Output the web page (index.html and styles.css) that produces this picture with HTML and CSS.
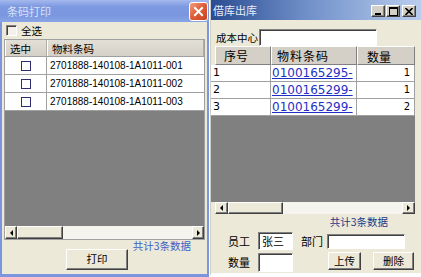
FILE: index.html
```html
<!DOCTYPE html>
<html lang="zh-CN">
<head>
    <meta charset="UTF-8">
    <title>条码打印 / 借库出库</title>
    <link rel="stylesheet" href="styles.css">
</head>
<body>
<div class="desk">
    <!-- 条码打印 -->
    <div class="xp-win">
        <div class="xp-title">
            <span class="xp-caption">条码打印</span>
            <span class="xp-close">
                <svg width="11" height="11" viewBox="0 0 11 11"><path d="M2 2 L9 9 M9 2 L2 9" stroke="#fff" stroke-width="2" stroke-linecap="square"/></svg>
            </span>
        </div>
        <div class="check-all"><span class="chk"></span>全选</div>
        <div class="l-grid">
            <div class="l-head">
                <span class="l-sel">选中</span>
                <span class="l-code">物料条码</span>
            </div>
            <div class="l-row"><span class="l-sel"><i class="box"></i></span><span class="l-code">2701888-140108-1A1011-001</span></div>
            <div class="l-row"><span class="l-sel"><i class="box"></i></span><span class="l-code">2701888-140108-1A1011-002</span></div>
            <div class="l-row"><span class="l-sel"><i class="box"></i></span><span class="l-code">2701888-140108-1A1011-003</span></div>
            <div class="empty"></div>
            <div class="hscroll">
                <span class="sb-btn"><i class="tri-l"></i></span>
                <span class="sb-thumb l-thumb"></span>
                <span class="sb-track"></span>
                <span class="sb-btn"><i class="tri-r"></i></span>
            </div>
        </div>
        <div class="l-total">共计3条数据</div>
        <button class="btn btn-print">打印</button>
    </div>

    <!-- 借库出库 -->
    <div class="cl-win">
        <div class="cl-title">
            <span class="cl-caption">借库出库</span>
            <span class="tb-btns">
                <span class="tb-btn"><svg width="8" height="8" viewBox="0 0 8 8"><rect x="1" y="6" width="6" height="2" fill="#000"/></svg></span>
                <span class="tb-btn"><svg width="9" height="9" viewBox="0 0 9 9"><rect x="0.5" y="0.5" width="8" height="8" fill="none" stroke="#000"/><rect x="0" y="0" width="9" height="2" fill="#000"/></svg></span>
                <span class="tb-btn tb-close"><svg width="8" height="7" viewBox="0 0 8 7"><path d="M0.5 0 L7.5 7 M7.5 0 L0.5 7" stroke="#000" stroke-width="1.6"/></svg></span>
            </span>
        </div>
        <div class="cost-row">
            <span class="cost-label">成本中心</span>
            <span class="field cost-input"></span>
        </div>
        <div class="r-grid">
            <div class="r-head">
                <span class="r-pad"></span>
                <span class="rh rh-no">序号</span>
                <span class="rh rh-code">物料条码</span>
                <span class="rh rh-qty">数量</span>
            </div>
            <div class="r-row"><span class="r-no">1</span><span class="r-code"><a href="#">0100165295-</a></span><span class="r-qty">1</span></div>
            <div class="r-row"><span class="r-no">2</span><span class="r-code"><a href="#">0100165299-</a></span><span class="r-qty">1</span></div>
            <div class="r-row"><span class="r-no">3</span><span class="r-code"><a href="#">0100165299-</a></span><span class="r-qty">2</span></div>
            <div class="empty"></div>
            <div class="hscroll r-scroll">
                <span class="sb-btn r-btn"><i class="tri-l"></i></span>
                <span class="sb-thumb r-thumb"></span>
                <span class="sb-track"></span>
                <span class="sb-btn r-btn"><i class="tri-r"></i></span>
            </div>
        </div>
        <div class="r-total">共计3条数据</div>
        <div class="form-row row-1">
            <span class="f-label">员工</span>
            <span class="field f-emp">张三</span>
            <span class="f-label f-dept-label">部门</span>
            <span class="field f-dept"></span>
        </div>
        <div class="form-row row-2">
            <span class="f-label">数量</span>
            <span class="field f-qty"></span>
            <button class="btn btn-up">上传</button>
            <button class="btn btn-del">删除</button>
        </div>
    </div>
</div>
</body>
</html>
```

FILE: styles.css
```css
* {
    box-sizing: border-box;
}
body {
    margin: 0;
    width: 421px;
    height: 277px;
    overflow: hidden;
    background: #fff;
    font-family: "Noto Sans CJK SC", "Liberation Sans", sans-serif;
    font-size: 10.5px;
    color: #000;
}
.desk {
    display: flex;
    gap: 1px;
    height: 277px;
}

/* shared bits */
.btn {
    font-family: "Noto Sans CJK SC", sans-serif;
    font-size: 10.5px;
    line-height: 1;
    padding: 0;
    background: #ece9d8;
    border: 1px solid;
    border-color: #fff #404040 #404040 #fff;
    box-shadow: inset -1px -1px #808080;
    color: #000;
}
.field {
    display: block;
    background: #fff;
    border: 1px solid;
    border-color: #808080 #fff #fff #808080;
    box-shadow: inset 1px 1px #404040;
}
.empty {
    flex: 1;
    background: #808080;
}
.hscroll {
    display: flex;
    height: 13px;
}
.sb-btn {
    width: 12px;
    display: flex;
    align-items: center;
    justify-content: center;
    background: #ece9d8;
    border: 1px solid;
    border-color: #fff #404040 #404040 #fff;
    box-shadow: inset -1px -1px #808080;
}
.sb-thumb {
    background: #ece9d8;
    border: 1px solid;
    border-color: #fff #404040 #404040 #fff;
    box-shadow: inset -1px -1px #808080;
}
.sb-track {
    flex: 1;
    background: #f5f4ef;
}
.tri-l, .tri-r {
    width: 0;
    height: 0;
    border-top: 3px solid transparent;
    border-bottom: 3px solid transparent;
}
.tri-l {
    border-right: 3px solid #000;
}
.tri-r {
    border-left: 3px solid #000;
}

/* 条码打印 window */
.xp-win {
    width: 209px;
    height: 277px;
    display: flex;
    flex-direction: column;
    background: #ece9d8;
    border: 2px solid #7a96df;
    border-top: 0;
    border-bottom-width: 3px;
}
.xp-title {
    height: 22px;
    margin: 0 -2px;
    padding-left: 7px;
    display: flex;
    align-items: center;
    justify-content: space-between;
    background: linear-gradient(#a5b9ee, #7d99e0 30%, #7a96df 70%, #8aa5e5);
    color: #d8e2f7;
    font-size: 11px;
}
.xp-close {
    width: 19px;
    height: 19px;
    margin-right: 1px;
    display: flex;
    align-items: center;
    justify-content: center;
    border: 1px solid #fff;
    border-radius: 3px;
    background: linear-gradient(135deg, #f0a080, #e0613b 45%, #c8431f);
}
.check-all {
    height: 17px;
    display: flex;
    align-items: center;
    gap: 4px;
    padding-left: 4px;
}
.chk {
    width: 11px;
    height: 11px;
    border: 1px solid;
    border-color: #808080 #fff #fff #808080;
    box-shadow: inset 1px 1px #404040;
    background: #f3f2ea;
}
.l-grid {
    height: 201px;
    margin: 0 2px;
    display: flex;
    flex-direction: column;
    border: 1px solid #a0a0a0;
}
.l-head {
    height: 17px;
    display: flex;
    background: linear-gradient(#e2dfd6, #d4d0c8);
    border-bottom: 1px solid #a0a0a0;
}
.l-head span {
    display: flex;
    align-items: center;
    padding-left: 4px;
    border-left: 1px solid #fff;
    border-right: 1px solid #b0ada4;
}
.l-row {
    height: 18px;
    display: flex;
    background: #fff;
    border-bottom: 1px solid #a0a0a0;
}
.l-sel {
    width: 42px;
    flex: none;
}
.l-row .l-sel {
    display: flex;
    align-items: center;
    justify-content: center;
    border-right: 1px solid #a0a0a0;
}
.l-code {
    flex: 1;
}
.l-row .l-code {
    padding-left: 3px;
    font-family: "Liberation Sans", sans-serif;
    font-size: 10px;
    line-height: 17px;
}
.box {
    width: 10px;
    height: 10px;
    border: 1px solid #2e2e6e;
}
.l-thumb {
    width: 46px;
}
.l-total {
    height: 9px;
    line-height: 12px;
    padding-right: 16px;
    text-align: right;
    color: #3b62c8;
}
.btn-print {
    width: 62px;
    height: 21px;
    margin-left: 64px;
}

/* 借库出库 window */
.cl-win {
    width: 211px;
    height: 277px;
    display: flex;
    flex-direction: column;
    background: #ece9d8;
    border-left: 1px solid #d0cdc4;
    border-bottom: 4px solid #fff;
}
.cl-title {
    height: 20px;
    padding: 0 5px 0 2px;
    display: flex;
    align-items: center;
    justify-content: space-between;
    background: linear-gradient(to right, #2a4c92, #6f8fc8 45%, #b9cdee);
    color: #e6ebf5;
    font-size: 11px;
}
.tb-btns {
    display: flex;
    gap: 1px;
    margin-top: 2px;
}
.tb-btn {
    width: 14px;
    height: 12px;
    display: flex;
    align-items: center;
    justify-content: center;
    background: #d4d0c8;
    border: 1px solid;
    border-color: #fff #404040 #404040 #fff;
    box-shadow: inset -1px -1px #808080;
}
.tb-close {
    margin-left: 1px;
}
.cost-row {
    height: 17px;
    margin-top: 9px;
    padding-left: 5px;
    display: flex;
    align-items: center;
}
.cost-label {
    width: 43px;
}
.cost-input {
    width: 118px;
    height: 17px;
}
.r-grid {
    width: 204px;
    height: 168px;
    display: flex;
    flex-direction: column;
}
.r-head {
    height: 19px;
    display: flex;
    font-size: 12px;
}
.r-pad {
    width: 4px;
}
.rh {
    display: flex;
    align-items: center;
    background: #d4d0c8;
    border: 1px solid;
    border-color: #fff #808080 #808080 #fff;
}
.rh-no {
    width: 56px;
    padding-left: 8px;
}
.rh-code {
    width: 86px;
    padding-left: 5px;
    letter-spacing: 1px;
}
.rh-qty {
    width: 58px;
    padding-left: 9px;
    padding-top: 2px;
}
.r-row {
    height: 17px;
    display: flex;
    background: #fff;
    border-bottom: 1px solid #a0a0a0;
    font-family: "DejaVu Sans", sans-serif;
    font-size: 11px;
    line-height: 16px;
}
.r-row span {
    border-right: 1px solid #a0a0a0;
    overflow: hidden;
    white-space: nowrap;
}
.r-no {
    width: 60px;
    padding-left: 2px;
}
.r-code {
    width: 86px;
    padding-left: 1px;
}
.r-code a {
    color: #1f2fc4;
    font-size: 12px;
}
.r-qty {
    width: 58px;
    padding-right: 4px;
    text-align: right;
    font-size: 10px;
}
.r-scroll {
    margin-left: 4px;
    height: 12px;
}
.r-btn {
    width: 13px;
}
.r-thumb {
    width: 55px;
}
.r-total {
    height: 15px;
    line-height: 15px;
    padding-right: 33px;
    text-align: right;
    color: #1e3a8c;
}
.form-row {
    display: flex;
    align-items: center;
    padding-left: 17px;
}
.row-1 {
    height: 18px;
    margin-top: 3px;
}
.row-2 {
    height: 20px;
    margin-top: 2px;
}
.f-label {
    width: 30px;
    font-size: 11px;
}
.f-emp {
    width: 35px;
    height: 18px;
    padding-left: 3px;
    font-size: 11px;
    line-height: 16px;
}
.f-dept-label {
    width: 26px;
    margin-left: 8px;
}
.f-dept {
    width: 78px;
    height: 15px;
}
.f-qty {
    width: 35px;
    height: 19px;
}
.btn-up {
    width: 33px;
    height: 18px;
    margin-left: 35px;
    margin-top: -2px;
}
.btn-del {
    width: 41px;
    height: 18px;
    margin-left: 12px;
    margin-top: -2px;
}
```
